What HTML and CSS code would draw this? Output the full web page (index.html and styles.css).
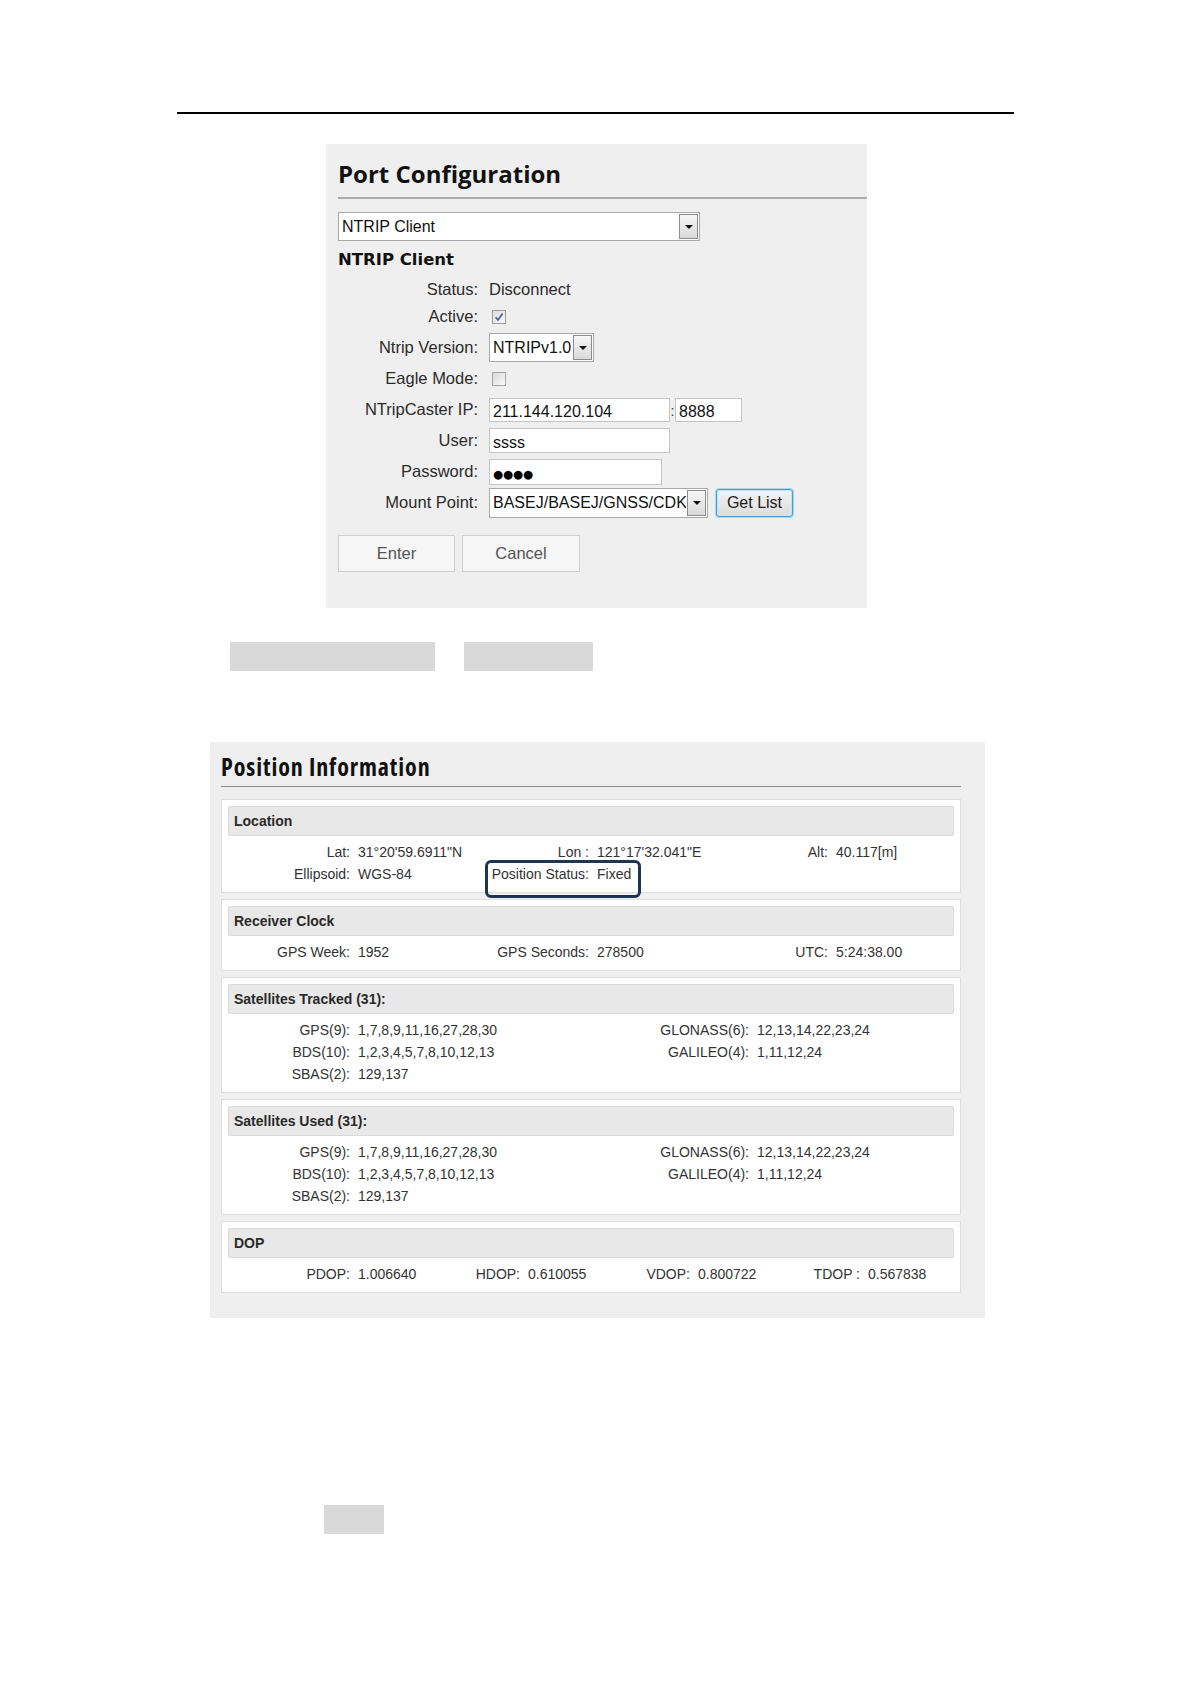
FILE: index.html
```html
<!DOCTYPE html>
<html lang="en">
<head>
<meta charset="utf-8">
<title>Port Configuration / Position Information</title>
<link rel="stylesheet" href="styles.css">
</head>
<body>
<div class="page">
  <div class="rule"></div>

  <section class="port">
    <h1 class="port-title">Port Configuration</h1>
    <div class="select wide"><span class="sel-text">NTRIP Client</span><span class="sel-btn"><i class="tri"></i></span></div>
    <h2 class="sub">NTRIP Client</h2>
    <div class="form">
      <div class="row first"><span class="lbl">Status:</span><span class="plain">Disconnect</span></div>
      <div class="row"><span class="lbl">Active:</span>
        <svg class="cb" width="14" height="14" viewBox="0 0 14 14"><defs><linearGradient id="cbg" x1="0" y1="0" x2="1" y2="1"><stop offset="0" stop-color="#dcdcdc"/><stop offset="1" stop-color="#fbfbfb"/></linearGradient></defs><rect x="0.5" y="0.5" width="13" height="13" fill="url(#cbg)" stroke="#9c9c9c"/><path d="M3.6 7.2 L6 10 L10.6 3.6" fill="none" stroke="#4758a6" stroke-width="1.7"/></svg>
      </div>
      <div class="row"><span class="lbl">Ntrip Version:</span>
        <div class="select ver"><span class="sel-text">NTRIPv1.0</span><span class="sel-btn"><i class="tri"></i></span></div>
      </div>
      <div class="row"><span class="lbl">Eagle Mode:</span>
        <svg class="cb" width="14" height="14" viewBox="0 0 14 14"><defs><linearGradient id="cbg2" x1="0" y1="0" x2="1" y2="1"><stop offset="0" stop-color="#d8d8d8"/><stop offset="1" stop-color="#fbfbfb"/></linearGradient></defs><rect x="0.5" y="0.5" width="13" height="13" fill="url(#cbg2)" stroke="#a4a4a4"/></svg>
      </div>
      <div class="row"><span class="lbl">NTripCaster IP:</span>
        <div class="input ip">211.144.120.104</div><span class="colon">:</span><div class="input port-no">8888</div>
      </div>
      <div class="row"><span class="lbl">User:</span><div class="input user">ssss</div></div>
      <div class="row"><span class="lbl">Password:</span><div class="input pass"><span class="dots">●●●●</span></div></div>
      <div class="row"><span class="lbl">Mount Point:</span>
        <div class="select mount"><span class="sel-text">BASEJ/BASEJ/GNSS/CDK</span><span class="sel-btn"><i class="tri"></i></span></div>
        <button class="getlist" type="button">Get List</button>
      </div>
    </div>
    <div class="actions">
      <button class="btn enter" type="button">Enter</button>
      <button class="btn cancel" type="button">Cancel</button>
    </div>
  </section>

  <div class="bars"><div class="bar b1"></div><div class="bar b2"></div></div>

  <section class="pos">
    <h1 class="pos-title">Position Information</h1>

    <div class="card">
      <div class="card-head">Location</div>
      <div class="card-body cols3">
        <div class="item"><span class="k">Lat:</span><span class="v">31°20'59.6911"N</span></div>
        <div class="item"><span class="k">Lon :</span><span class="v">121°17'32.041"E</span></div>
        <div class="item"><span class="k">Alt:</span><span class="v">40.117[m]</span></div>
        <div class="item"><span class="k">Ellipsoid:</span><span class="v">WGS-84</span></div>
        <div class="item hl"><span class="k">Position Status:</span><span class="v">Fixed</span></div>
        <div class="item"></div>
      </div>
    </div>

    <div class="card">
      <div class="card-head">Receiver Clock</div>
      <div class="card-body cols3">
        <div class="item"><span class="k">GPS Week:</span><span class="v">1952</span></div>
        <div class="item"><span class="k">GPS Seconds:</span><span class="v">278500</span></div>
        <div class="item"><span class="k">UTC:</span><span class="v">5:24:38.00</span></div>
      </div>
    </div>

    <div class="card">
      <div class="card-head">Satellites Tracked (31):</div>
      <div class="card-body cols2">
        <div class="item"><span class="k">GPS(9):</span><span class="v">1,7,8,9,11,16,27,28,30</span></div>
        <div class="item"><span class="k">GLONASS(6):</span><span class="v">12,13,14,22,23,24</span></div>
        <div class="item"><span class="k">BDS(10):</span><span class="v">1,2,3,4,5,7,8,10,12,13</span></div>
        <div class="item"><span class="k">GALILEO(4):</span><span class="v">1,11,12,24</span></div>
        <div class="item"><span class="k">SBAS(2):</span><span class="v">129,137</span></div>
        <div class="item"></div>
      </div>
    </div>

    <div class="card">
      <div class="card-head">Satellites Used (31):</div>
      <div class="card-body cols2">
        <div class="item"><span class="k">GPS(9):</span><span class="v">1,7,8,9,11,16,27,28,30</span></div>
        <div class="item"><span class="k">GLONASS(6):</span><span class="v">12,13,14,22,23,24</span></div>
        <div class="item"><span class="k">BDS(10):</span><span class="v">1,2,3,4,5,7,8,10,12,13</span></div>
        <div class="item"><span class="k">GALILEO(4):</span><span class="v">1,11,12,24</span></div>
        <div class="item"><span class="k">SBAS(2):</span><span class="v">129,137</span></div>
        <div class="item"></div>
      </div>
    </div>

    <div class="card">
      <div class="card-head">DOP</div>
      <div class="card-body cols4">
        <div class="item"><span class="k">PDOP:</span><span class="v">1.006640</span></div>
        <div class="item"><span class="k">HDOP:</span><span class="v">0.610055</span></div>
        <div class="item"><span class="k">VDOP:</span><span class="v">0.800722</span></div>
        <div class="item"><span class="k">TDOP :</span><span class="v">0.567838</span></div>
      </div>
    </div>
  </section>

  <div class="bar b3"></div>
</div>
</body>
</html>
```

FILE: styles.css
```css
* { box-sizing: border-box; }
html, body { margin: 0; padding: 0; background: #ffffff; }
body { font-family: "Liberation Sans", Arial, sans-serif; color: #222; }
.page { width: 1191px; min-height: 1684px; overflow: hidden; }

.rule { margin: 112px 0 0 177px; width: 837px; height: 2px; background: #000; }

/* ---------- Port configuration ---------- */
.port {
  margin: 30px 0 0 326px; width: 541px; height: 464px;
  background: #efefef; padding: 14px 0 0 12px;
}
.port-title {
  margin: 0; font: 700 24px/32px "Open Sans", sans-serif; color: #111;
  padding-bottom: 7px; border-bottom: 2px solid #acacac;
}
.select {
  display: flex; height: 29px; background: #fff; border: 1px solid #a9a9a9;
  font: 16px "Liberation Sans", Arial, sans-serif; color: #111;
}
.select .sel-text { flex: 1; padding-left: 3px; display: flex; align-items: center; white-space: nowrap; overflow: hidden; }
.select .sel-btn {
  width: 19px; display: flex; align-items: center; justify-content: center;
  background: linear-gradient(#f7f7f7, #d9d9d9); border: 1px solid #8c8c8c; margin: 1px;
}
.tri { width: 0; height: 0; border-left: 4px solid transparent; border-right: 4px solid transparent; border-top: 4px solid #111; }
.select.wide { margin-top: 13px; width: 362px; }
.select.ver { width: 105px; height: 29px; }
.select.mount { width: 219px; height: 30px; }

.sub { margin: 9px 0 0; font: 700 16.5px/20px "DejaVu Sans", sans-serif; color: #111; }

.form { margin-top: 7px; }
.row { display: flex; align-items: center; height: 31px; }
.row.first { height: 24px; }
.lbl {
  width: 140px; margin-right: 11px; text-align: right;
  font: 16.5px "Liberation Sans", Arial, sans-serif; color: #2b2b2b;
}
.plain { font: 16.5px "Liberation Sans", Arial, sans-serif; color: #2b2b2b; }
.cb { display: block; margin-left: 3px; }
.input {
  height: 25px; background: #fff; border: 1px solid #c4c4c4;
  font: 16px "Liberation Sans", Arial, sans-serif; color: #111;
  padding: 5px 0 0 3px; line-height: 18px; white-space: nowrap;
}
.input.ip { width: 181px; height: 24px; padding-top: 4px; }
.colon { width: 5px; text-align: center; font: 14px "Liberation Sans", Arial, sans-serif; color: #333; padding-top: 3px; }
.input.port-no { width: 67px; height: 24px; padding-top: 4px; }
.input.user { width: 181px; }
.input.pass { width: 173px; height: 26px; padding-top: 4px; }
.dots { font: 11.5px "DejaVu Sans", sans-serif; letter-spacing: 0; color: #000; }

.getlist {
  margin-left: 8px; width: 77px; height: 28px; padding: 0;
  font: 16px "Liberation Sans", Arial, sans-serif; color: #1a1a1a;
  background: linear-gradient(#f4f4f4, #dcdcdc);
  border: 1px solid #3e9fd9; border-radius: 3px;
  box-shadow: inset 0 0 0 1px #bfe3f7, 0 0 0 1px #a9d7f1;
}

.actions { display: flex; gap: 7px; margin-top: 17px; }
.btn {
  height: 37px; padding: 0; background: #f6f6f6; border: 1px solid #cfcfcf;
  font: 16.5px "Liberation Sans", Arial, sans-serif; color: #555;
}
.btn.enter { width: 117px; }
.btn.cancel { width: 118px; }

/* ---------- placeholder bars ---------- */
.bars { display: flex; margin: 34px 0 0 230px; gap: 29px; }
.bar { height: 29px; background: #d9d9d9; }
.b1 { width: 205px; }
.b2 { width: 129px; }
.b3 { width: 60px; margin: 187px 0 0 324px; }

/* ---------- Position information ---------- */
.pos {
  margin: 71px 0 0 210px; width: 775px;
  background: #efefef; padding: 10px 24px 25px 11px;
}
.pos-title {
  margin: 0 0 12px; font: 700 24px/30px "Open Sans", sans-serif; font-stretch: 75%;
  letter-spacing: 0.9px; color: #111;
  padding-bottom: 4px; border-bottom: 1px solid #8a8a8a;
}
.card {
  background: #fff; border: 1px solid #dedede; padding: 6px 6px 7px; margin-bottom: 6px;
}
.card:last-child { margin-bottom: 0; }
.card-head {
  height: 30px; background: #e8e8e8; border: 1px solid #dadada; border-radius: 2px;
  display: flex; align-items: center; padding-left: 5px;
  font: 700 14px "Liberation Sans", Arial, sans-serif; color: #2a2a2a;
}
.card-body {
  display: grid; padding-top: 5px;
  font: 14px/22px "Liberation Sans", Arial, sans-serif; color: #333;
}
.cols3 { grid-template-columns: 239px 239px 1fr; }
.cols2 { grid-template-columns: 399px 1fr; }
.cols4 { grid-template-columns: 170px 170px 170px 1fr; }
.item { display: flex; white-space: nowrap; height: 22px; }
.item .k { width: 122px; text-align: right; flex: none; }
.item .v { margin-left: 8px; }
.item.hl { position: relative; }
.item.hl::after {
  content: ""; position: absolute; left: 18px; top: -3px; width: 150px; height: 32px;
  border: 3px solid #1f3453; border-radius: 6px;
}
```
